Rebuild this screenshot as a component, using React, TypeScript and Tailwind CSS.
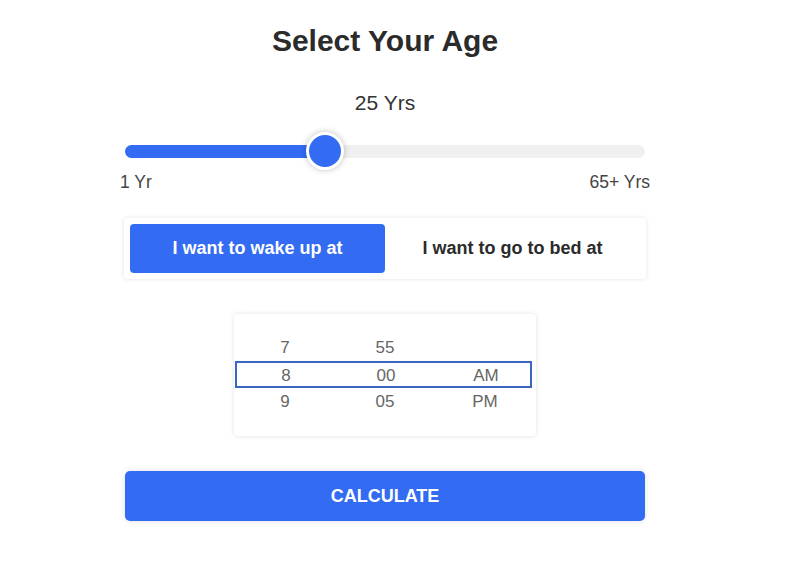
import { useState } from "react";

const BLUE = "bg-[#336bf3]";

export default function App() {
  const [mode, setMode] = useState<"wake" | "bed">("wake");
  const pct = ((25 - 1) / 64) * 100 + 0.9;

  return (
    <div className="min-h-[570px] w-[785px] bg-white font-['Liberation_Sans',Arial,sans-serif] text-[#333]">
      <div className="ml-[125px] w-[520px] pt-[23px] flex flex-col items-center">
        <h1 className="text-[30px] leading-[36px] font-bold text-[#2b2b2b]">Select Your Age</h1>
        <div className="mt-[32px] text-[21px] leading-[24px] text-[#333]">25 Yrs</div>

        <div className="relative mt-[18px] w-full h-[36px] flex items-center">
          <div className="w-full h-[13px] rounded-full bg-[#f0f0f0]">
            <div className={`h-full rounded-full ${BLUE}`} style={{ width: `${pct}%` }} />
          </div>
          <div
            className={`absolute top-[-1px] w-[38px] h-[38px] rounded-full ${BLUE} border-[3px] border-white shadow-[0_0_6px_rgba(0,0,0,0.25)]`}
            style={{ left: `calc(${pct}% - 19px)` }}
          />
        </div>
        <div className="w-[530px] flex justify-between mt-[3px] text-[17.5px] leading-[20px] text-[#444]">
          <span>1 Yr</span>
          <span>65+ Yrs</span>
        </div>

        <div className="mt-[26px] w-[522px] p-[6px] bg-white rounded-[3px] shadow-[0_0_4px_rgba(0,0,0,0.12)] flex">
          <button
            onClick={() => setMode("wake")}
            className={`w-[255px] h-[49px] rounded-[4px] text-[18px] font-bold ${mode === "wake" ? `${BLUE} text-white` : "text-[#2b2b2b]"}`}
          >
            I want to wake up at
          </button>
          <button
            onClick={() => setMode("bed")}
            className={`flex-1 h-[49px] rounded-[4px] text-[18px] font-bold ${mode === "bed" ? `${BLUE} text-white` : "text-[#2b2b2b]"}`}
          >
            I want to go to bed at
          </button>
        </div>

        <div className="mt-[35px] w-[302px] h-[122px] bg-white rounded-[4px] shadow-[0_0_5px_rgba(0,0,0,0.12)] pt-[20px] text-[17px] text-[#666]">
          <div className="grid grid-cols-[100px_100px_100px] ml-[1px] h-[27px] items-center text-center">
            <span>7</span>
            <span>55</span>
            <span />
          </div>
          <div className="grid grid-cols-[100px_100px_100px] ml-[1px] h-[27px] w-[297px] items-center text-center border-2 border-[#3a66c2]">
            <span className="-ml-[2px]">8</span>
            <span className="-ml-[2px]">00</span>
            <span className="-ml-[2px]">AM</span>
          </div>
          <div className="grid grid-cols-[100px_100px_100px] ml-[1px] h-[27px] items-center text-center">
            <span>9</span>
            <span>05</span>
            <span>PM</span>
          </div>
        </div>

        <button
          className={`mt-[35px] w-full h-[50px] rounded-[5px] ${BLUE} text-white text-[18px] font-bold uppercase shadow-[0_0_6px_rgba(0,0,0,0.12)]`}
        >
          Calculate
        </button>
      </div>
    </div>
  );
}
